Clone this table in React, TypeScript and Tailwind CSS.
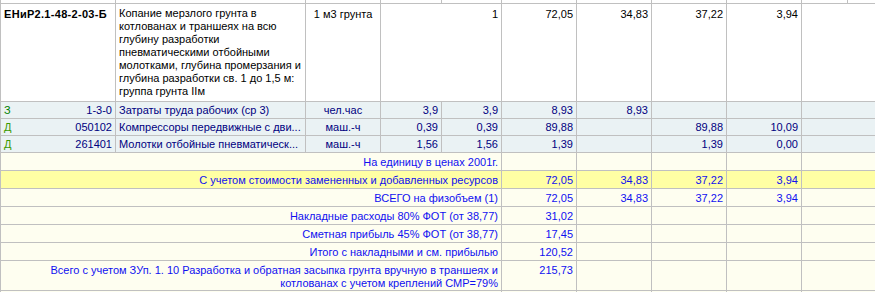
import React from 'react';

type Res = {
  tag: string;
  tagColor: string;
  code: string;
  name: string;
  unit: string;
  q1: string;
  q2: string;
  total: string;
  c1: string;
  c2: string;
  c3: string;
};

const resources: Res[] = [
  { tag: 'З', tagColor: 'text-[#008000]', code: '1-3-0', name: 'Затраты труда рабочих (ср 3)', unit: 'чел.час', q1: '3,9', q2: '3,9', total: '8,93', c1: '8,93', c2: '', c3: '' },
  { tag: 'Д', tagColor: 'text-[#3c9a00]', code: '050102', name: 'Компрессоры передвижные с дви...', unit: 'маш.-ч', q1: '0,39', q2: '0,39', total: '89,88', c1: '', c2: '89,88', c3: '10,09' },
  { tag: 'Д', tagColor: 'text-[#3c9a00]', code: '261401', name: 'Молотки отбойные пневматическ...', unit: 'маш.-ч', q1: '1,56', q2: '1,56', total: '1,39', c1: '', c2: '1,39', c3: '0,00' },
];

type Sum = { label: React.ReactNode; v: string[]; bg: string; h: string };

const sums: Sum[] = [
  { label: 'На единицу в ценах 2001г.', v: ['', '', '', ''], bg: 'bg-[#fefef0]', h: 'h-[18px]' },
  { label: 'С учетом стоимости замененных и добавленных ресурсов', v: ['72,05', '34,83', '37,22', '3,94'], bg: 'bg-[#ffffa4]', h: 'h-[18px]' },
  { label: 'ВСЕГО на физобъем (1)', v: ['72,05', '34,83', '37,22', '3,94'], bg: 'bg-[#fefef0]', h: 'h-[18px]' },
  { label: 'Накладные расходы 80% ФОТ (от 38,77)', v: ['31,02', '', '', ''], bg: 'bg-[#fefef0]', h: 'h-[18px]' },
  { label: 'Сметная прибыль 45% ФОТ (от 38,77)', v: ['17,45', '', '', ''], bg: 'bg-[#fefef0]', h: 'h-[18px]' },
  { label: 'Итого с накладными и см. прибылью', v: ['120,52', '', '', ''], bg: 'bg-[#fefef0]', h: 'h-[18px]' },
  {
    label: (
      <>
        Всего с учетом ЗУп. 1. 10 Разработка и обратная засыпка грунта вручную в траншеях и
        <br />
        котлованах с учетом креплений СМР=79%
      </>
    ),
    v: ['215,73', '', '', ''],
    bg: 'bg-[#fefef0]',
    h: 'h-[30px]',
  },
];

const cell = 'border border-[#c0c0c0] px-[3px] leading-[13px]';

export default function App() {
  return (
    <div className="w-[875px] h-[292px] overflow-hidden bg-white font-['Liberation_Sans',_Arial,_sans-serif] text-[11px] text-black">
      <table className="table-fixed border-collapse w-[900px] -mt-px">
        <colgroup>
          <col className="w-[115px]" />
          <col className="w-[190px]" />
          <col className="w-[75px]" />
          <col className="w-[61px]" />
          <col className="w-[60px]" />
          <col className="w-[75px]" />
          <col className="w-[75px]" />
          <col className="w-[75px]" />
          <col className="w-[75px]" />
          <col className="w-[46px]" />
          <col className="w-[53px]" />
        </colgroup>
        <tbody>
          {/* header tail */}
          <tr className="h-[4px]">
            {Array.from({ length: 11 }).map((_, i) => (
              <td key={i} className="border border-[#c0c0c0] p-0" />
            ))}
          </tr>

          {/* work item */}
          <tr className="h-[98px] bg-white align-top">
            <td className={`${cell} pt-[4px] font-bold tracking-[0.3px]`}>ЕНиР2.1-48-2-03-Б</td>
            <td className={`${cell} pt-[3px]`}>
              Копание мерзлого грунта в котлованах и траншеях на всю глубину разработки пневматическими отбойными
              молотками, глубина промерзания и глубина разработки св. 1 до 1,5 м: группа грунта IIм
            </td>
            <td className={`${cell} pt-[4px] text-center`}>1 м3 грунта</td>
            <td className={`${cell} pt-[4px] text-right`} colSpan={2}>1</td>
            <td className={`${cell} pt-[4px] text-right`}>72,05</td>
            <td className={`${cell} pt-[4px] text-right`}>34,83</td>
            <td className={`${cell} pt-[4px] text-right`}>37,22</td>
            <td className={`${cell} pt-[4px] text-right`}>3,94</td>
            <td className={cell} colSpan={2} />
          </tr>

          {/* resources */}
          {resources.map((r) => (
            <tr key={r.code} className="h-[17px] bg-[#eaf2f4] text-[#000080]">
              <td className={`${cell} pt-px`}>
                <div className="flex justify-between">
                  <span className={r.tagColor}>{r.tag}</span>
                  <span>{r.code}</span>
                </div>
              </td>
              <td className={`${cell} pt-px whitespace-nowrap overflow-hidden`}>{r.name}</td>
              <td className={`${cell} pt-px text-center`}>{r.unit}</td>
              <td className={`${cell} pt-px text-right`}>{r.q1}</td>
              <td className={`${cell} pt-px text-right`}>{r.q2}</td>
              <td className={`${cell} pt-px text-right`}>{r.total}</td>
              <td className={`${cell} pt-px text-right`}>{r.c1}</td>
              <td className={`${cell} pt-px text-right`}>{r.c2}</td>
              <td className={`${cell} pt-px text-right`}>{r.c3}</td>
              <td className={cell} colSpan={2} />
            </tr>
          ))}

          {/* totals */}
          {sums.map((s, i) => (
            <tr key={i} className={`${s.h} ${s.bg} text-[#1010f0] align-top`}>
              <td className={`${cell} pt-[3px] text-right whitespace-nowrap`} colSpan={5}>
                {s.label}
              </td>
              {s.v.map((v, j) => (
                <td key={j} className={`${cell} pt-[3px] text-right`}>
                  {v}
                </td>
              ))}
              <td className={cell} colSpan={2} />
            </tr>
          ))}
          <tr className="h-[6px] bg-[#fefef0]">
            <td className={cell} colSpan={5} />
            <td className={cell} />
            <td className={cell} />
            <td className={cell} />
            <td className={cell} />
            <td className={cell} colSpan={2} />
          </tr>
        </tbody>
      </table>
    </div>
  );
}
